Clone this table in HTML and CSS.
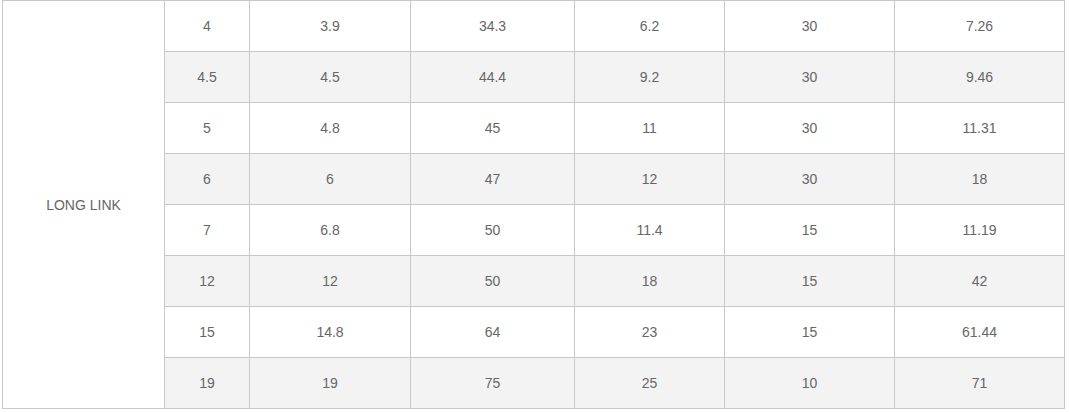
FILE: index.html
```html
<!DOCTYPE html>
<html>
<head>
<meta charset="utf-8">
<link rel="stylesheet" href="styles.css">
</head>
<body>
<table class="spec">
  <colgroup>
    <col class="c0"><col class="c1"><col class="c2"><col class="c3"><col class="c4"><col class="c5"><col class="c6">
  </colgroup>
  <tbody>
    <tr><td class="label" rowspan="8">LONG LINK</td><td>4</td><td>3.9</td><td>34.3</td><td>6.2</td><td>30</td><td>7.26</td></tr>
    <tr class="alt"><td>4.5</td><td>4.5</td><td>44.4</td><td>9.2</td><td>30</td><td>9.46</td></tr>
    <tr><td>5</td><td>4.8</td><td>45</td><td>11</td><td>30</td><td>11.31</td></tr>
    <tr class="alt"><td>6</td><td>6</td><td>47</td><td>12</td><td>30</td><td>18</td></tr>
    <tr><td>7</td><td>6.8</td><td>50</td><td>11.4</td><td>15</td><td>11.19</td></tr>
    <tr class="alt"><td>12</td><td>12</td><td>50</td><td>18</td><td>15</td><td>42</td></tr>
    <tr><td>15</td><td>14.8</td><td>64</td><td>23</td><td>15</td><td>61.44</td></tr>
    <tr class="alt"><td>19</td><td>19</td><td>75</td><td>25</td><td>10</td><td>71</td></tr>
  </tbody>
</table>
</body>
</html>
```

FILE: styles.css
```css
html, body {
  margin: 0;
  padding: 0;
  background: #fff;
}
body {
  padding-left: 2px;
  font-family: "Liberation Sans", Arial, sans-serif;
  font-size: 14px;
  color: #666;
}
.spec {
  border-collapse: collapse;
  table-layout: fixed;
  width: 1063px;
}
.spec td {
  border: 1px solid #c8c8c8;
  height: 50px;
  padding: 0;
  text-align: center;
  vertical-align: middle;
  line-height: 16px;
}
.spec tr { height: 51px; }
.spec tr.alt td { background: #f3f3f3; }
.spec td.label { background: #fff; }
.c0 { width: 162px; }
.c1 { width: 85px; }
.c2 { width: 161px; }
.c3 { width: 164px; }
.c4 { width: 150px; }
.c5 { width: 170px; }
.c6 { width: 170px; }
```
